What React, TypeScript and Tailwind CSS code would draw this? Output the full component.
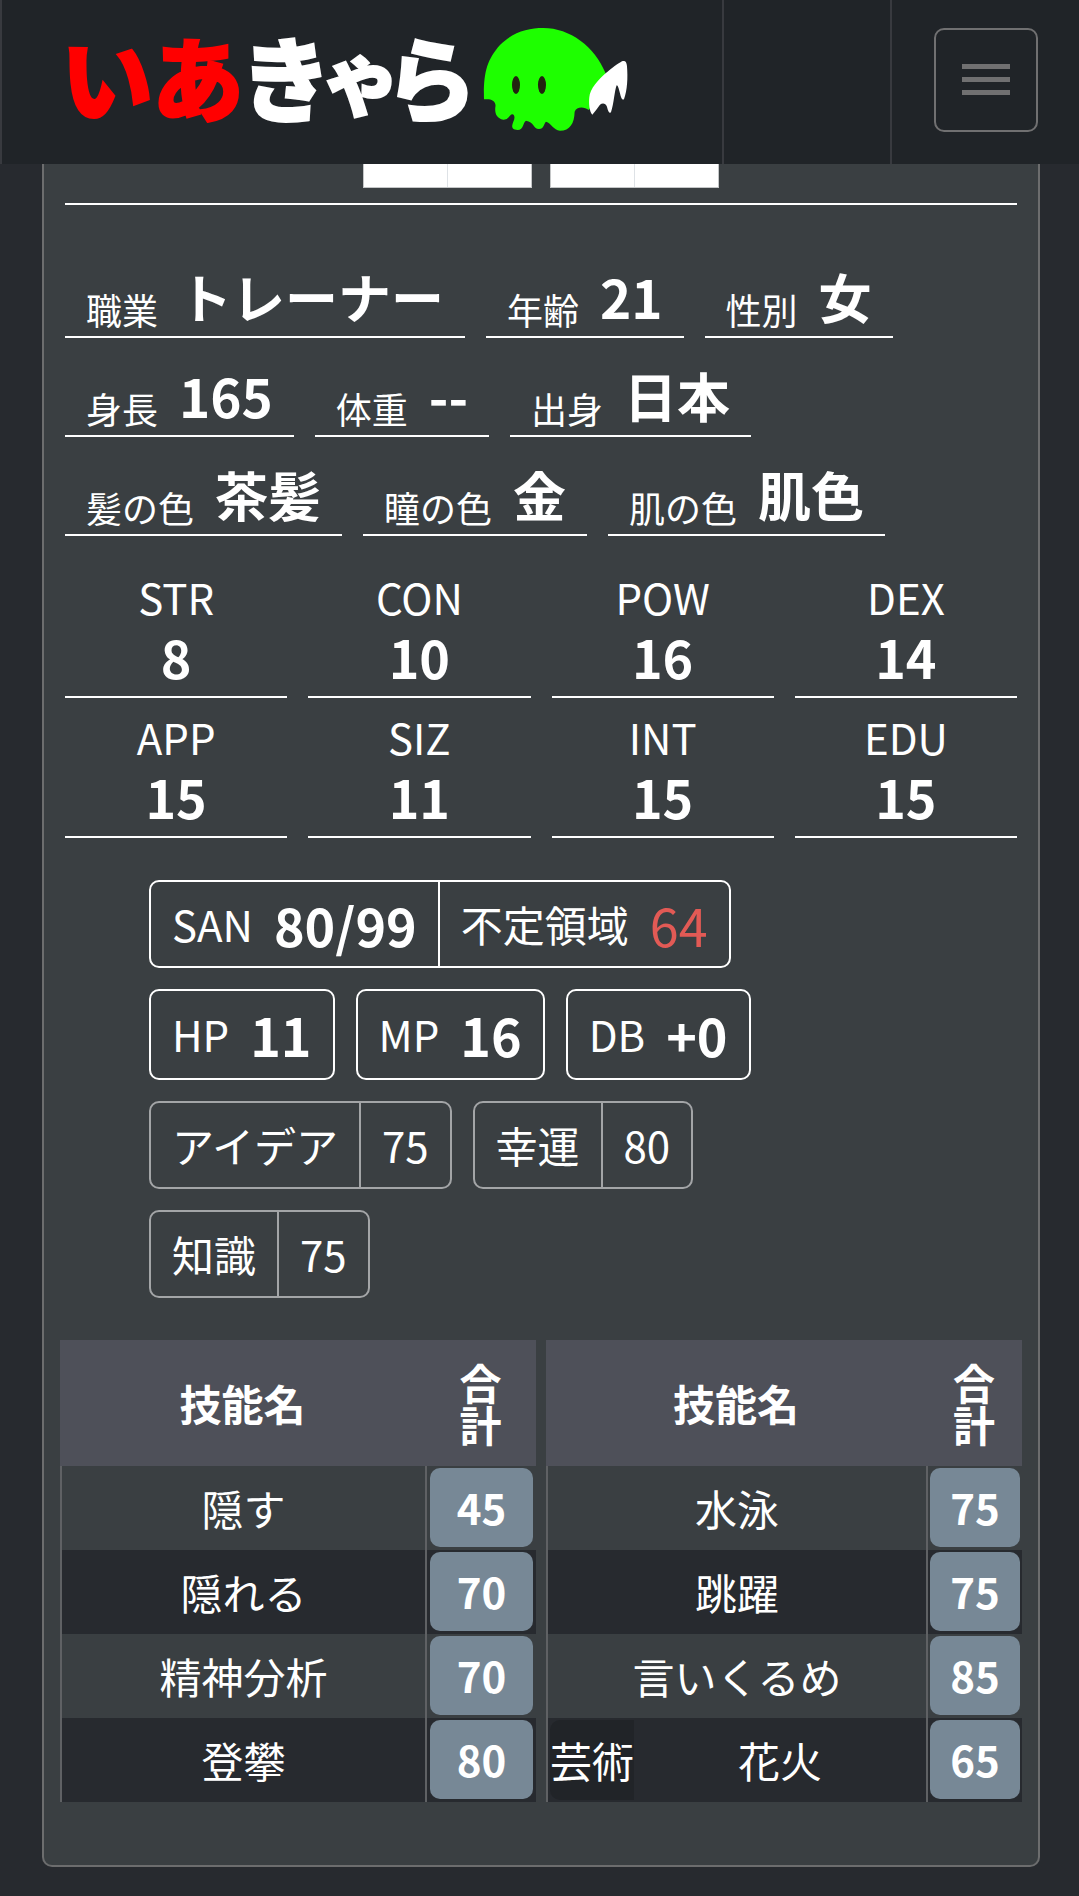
import type { ReactNode } from 'react'
import clsx from 'clsx'

const profile = [
  { label: '職業', value: 'トレーナー' },
  { label: '年齢', value: '21' },
  { label: '性別', value: '女' },
  { label: '身長', value: '165' },
  { label: '体重', value: '--' },
  { label: '出身', value: '日本' },
  { label: '髪の色', value: '茶髪' },
  { label: '瞳の色', value: '金' },
  { label: '肌の色', value: '肌色' },
]

const abilities = [
  { label: 'STR', value: 8 },
  { label: 'CON', value: 10 },
  { label: 'POW', value: 16 },
  { label: 'DEX', value: 14 },
  { label: 'APP', value: 15 },
  { label: 'SIZ', value: 11 },
  { label: 'INT', value: 15 },
  { label: 'EDU', value: 15 },
]

type Skill = { name: string; total: number; group?: string }

const leftSkills: Skill[] = [
  { name: '隠す', total: 45 },
  { name: '隠れる', total: 70 },
  { name: '精神分析', total: 70 },
  { name: '登攀', total: 80 },
]

const rightSkills: Skill[] = [
  { name: '水泳', total: 75 },
  { name: '跳躍', total: 75 },
  { name: '言いくるめ', total: 85 },
  { name: '花火', total: 65, group: '芸術' },
]

function Logo() {
  return (
    <svg
      viewBox="0 -20 580 164"
      className="w-[580px] max-w-full"
      role="img"
      aria-label="いあきゃら"
    >
      <g
        fontSize="92"
        fontWeight="900"
        strokeWidth="2"
        textAnchor="middle"
        className="font-['Noto_Sans_CJK_JP',sans-serif]"
      >
        <g fill="#ff0000" stroke="#ff0000">
          <text x="47" y="95">い</text>
          <text x="138" y="95">あ</text>
        </g>
        <g fill="#ffffff" stroke="#ffffff">
          <text x="226" y="95">き</text>
          <text x="301" y="89" fontSize="80">ゃ</text>
          <text x="371" y="95">ら</text>
        </g>
      </g>
      <g transform="translate(280 -10) scale(0.3333)">
        <path
          fill="#1eff00"
          d="M432 268C430 190 440 150 480 105C520 65 565 54 610 54C690 54 765 110 797 190L775 260L746 300C735 291 710 288 704 305C703 340 690 362 660 362C640 360 635 340 618 335C612 340 612 357 597 357C580 357 582 335 558 332C548 337 552 360 533 360C510 358 517 345 520 335C526 325 524 312 516 313C508 315 505 330 490 329C470 325 464 310 466 292C470 275 455 268 442 268Z"
        />
        <path
          fill="#ffffff"
          d="M797 190C815 175 835 160 846 154C855 150 860 155 861 168C864 205 862 240 852 268C846 272 843 262 840 250C836 235 834 226 830 226C824 240 822 280 813 307C808 312 803 300 801 290C797 280 788 278 780 284C772 295 765 305 757 314C748 305 746 280 748 262C750 235 775 210 797 190Z"
        />
        <ellipse cx="528" cy="225" rx="12" ry="27" fill="#232310" />
        <ellipse cx="606" cy="225" rx="12" ry="27" fill="#232310" />
      </g>
    </svg>
  )
}

function Header() {
  return (
    <header className="flex h-[164px] bg-[#202428]">
      <a
        href="#top"
        className="flex min-w-0 flex-1 items-center border-l-2 border-[#383a3f] pl-[58px]"
      >
        <Logo />
      </a>
      <div className="w-[168px] border-l-2 border-[#383a3f]" />
      <div className="flex w-[189px] items-center justify-center border-l-2 border-[#383a3f] pb-1">
        <button
          type="button"
          aria-label="メニュー"
          className="flex size-[104px] items-center justify-center rounded-[10px] border-2 border-[#707071]"
        >
          <svg width="48" height="32" viewBox="0 0 48 32" fill="#707071">
            <rect y="0" width="48" height="5" />
            <rect y="13" width="48" height="5" />
            <rect y="26" width="48" height="5" />
          </svg>
        </button>
      </div>
    </header>
  )
}

function Thumbnail() {
  return (
    <div className="flex h-6 w-[169px] border border-t-0 border-[#c4c6c7] bg-white">
      <div className="flex-1 border-r border-[#dee2e6]" />
      <div className="flex-1" />
    </div>
  )
}

function Badge({
  children,
  format = 'default',
}: {
  children: ReactNode
  format?: 'default' | 'tall' | 'muted'
}) {
  const variantsFormats = {
    default: 'h-[88px] border-white divide-white',
    tall: 'h-[91px] border-white divide-white',
    muted: 'h-[88px] border-[#a3a5a7] divide-[#a3a5a7]',
  }
  return (
    <dl
      className={`flex divide-x-2 rounded-[10px] border-2 ${variantsFormats[format]}`}
    >
      {children}
    </dl>
  )
}

function Pair({
  label,
  value,
  danger,
}: {
  label: string
  value: string
  danger?: boolean
}) {
  return (
    <div className="flex items-center gap-[21px] px-[21px]">
      <dt className="pb-0.5">{label}</dt>
      <dd
        className={clsx(
          'text-[52px]',
          danger ? 'text-[#e25a55]' : 'font-bold'
        )}
      >
        {value}
      </dd>
    </div>
  )
}

function Roll({ label, value }: { label: string; value: number }) {
  return (
    <Badge format="muted">
      <dt className="flex items-center px-[21px] pb-0.5">{label}</dt>
      <dd className="flex items-center px-[21px] pb-0.5">{value}</dd>
    </Badge>
  )
}

function SkillTable({ skills, narrow }: { skills: Skill[]; narrow?: boolean }) {
  return (
    <table className="w-full table-fixed border-separate border-spacing-0 text-center">
      <thead className="bg-[#4e5059]">
        <tr className="h-[126px]">
          <th className="p-0 pb-0.5 font-bold">技能名</th>
          <th
            className={clsx(
              'py-0 leading-[42px] font-bold break-all',
              narrow ? 'w-[96px] px-[26px]' : 'w-[111px] px-8'
            )}
          >
            合計
          </th>
        </tr>
      </thead>
      <tbody>
        {skills.map(({ name, total, group }) => (
          <tr key={name} className="h-[84px] even:bg-[#272a2f]">
            <td
              className={clsx(
                'border-l-2 border-[#5f6164] p-0',
                !group && 'pb-0.5'
              )}
            >
              {group ? (
                <div className="flex h-20 items-center pl-0.5">
                  <span className="flex h-20 items-center rounded-l-[10px] bg-[#212428] pb-0.5">
                    {group}
                  </span>
                  <span className="flex-1 pb-0.5">{name}</span>
                </div>
              ) : (
                name
              )}
            </td>
            <td
              className={clsx(
                'border-l-2 border-[#5f6164] pt-0.5 pb-[3px]',
                narrow ? 'px-0.5' : 'px-[3px]'
              )}
            >
              <button
                type="button"
                className="block h-[79px] w-full rounded-[10px] bg-[#778896] pb-0.5 font-bold"
              >
                {total}
              </button>
            </td>
          </tr>
        ))}
      </tbody>
    </table>
  )
}

export default function App() {
  return (
    <div
      id="top"
      lang="ja"
      className="min-h-screen bg-[#272a2f] pb-[29px] font-['Noto_Sans_CJK_JP',sans-serif] text-[42px] leading-[63px] text-white"
    >
      <Header />
      <main className="mr-[39px] ml-[42px] rounded-b-[10px] border-x-2 border-b-2 border-[#6c6d6e] bg-[#3a3f42] pb-[63px]">
        <div className="px-[21px]">
          <div className="flex justify-center gap-[18px] border-b-2 border-white pb-[15px]">
            <Thumbnail />
            <Thumbnail />
          </div>

          <dl className="mt-[52px] flex flex-wrap gap-x-[21px] gap-y-[18px]">
            {profile.map(({ label, value }) => (
              <div
                key={label}
                className="flex items-end gap-[21px] border-b-2 border-white px-[21px]"
              >
                <dt className="text-[36px] leading-[54px]">{label}</dt>
                <dd className="text-[53px] leading-[79px] font-bold">
                  {value}
                </dd>
              </div>
            ))}
          </dl>

          <dl className="mt-8 grid grid-cols-4 gap-x-[21px] gap-y-[10px] text-center">
            {abilities.map(({ label, value }) => (
              <div key={label} className="border-b-2 border-white pb-2">
                <dt className="leading-[58px]">{label}</dt>
                <dd className="text-[52px] leading-[62px] font-bold">
                  {value}
                </dd>
              </div>
            ))}
          </dl>
        </div>

        <div className="my-[42px] flex flex-wrap gap-[21px] px-[105px]">
          <Badge>
            <Pair label="SAN" value="80/99" />
            <Pair label="不定領域" value="64" danger />
          </Badge>
          <Badge format="tall">
            <Pair label="HP" value="11" />
          </Badge>
          <Badge format="tall">
            <Pair label="MP" value="16" />
          </Badge>
          <Badge format="tall">
            <Pair label="DB" value="+0" />
          </Badge>
          <Roll label="アイデア" value={75} />
          <Roll label="幸運" value={80} />
          <Roll label="知識" value={75} />
        </div>

        <div className="grid grid-cols-2 gap-[10px] px-4">
          <SkillTable skills={leftSkills} />
          <SkillTable skills={rightSkills} narrow />
        </div>
      </main>
    </div>
  )
}
